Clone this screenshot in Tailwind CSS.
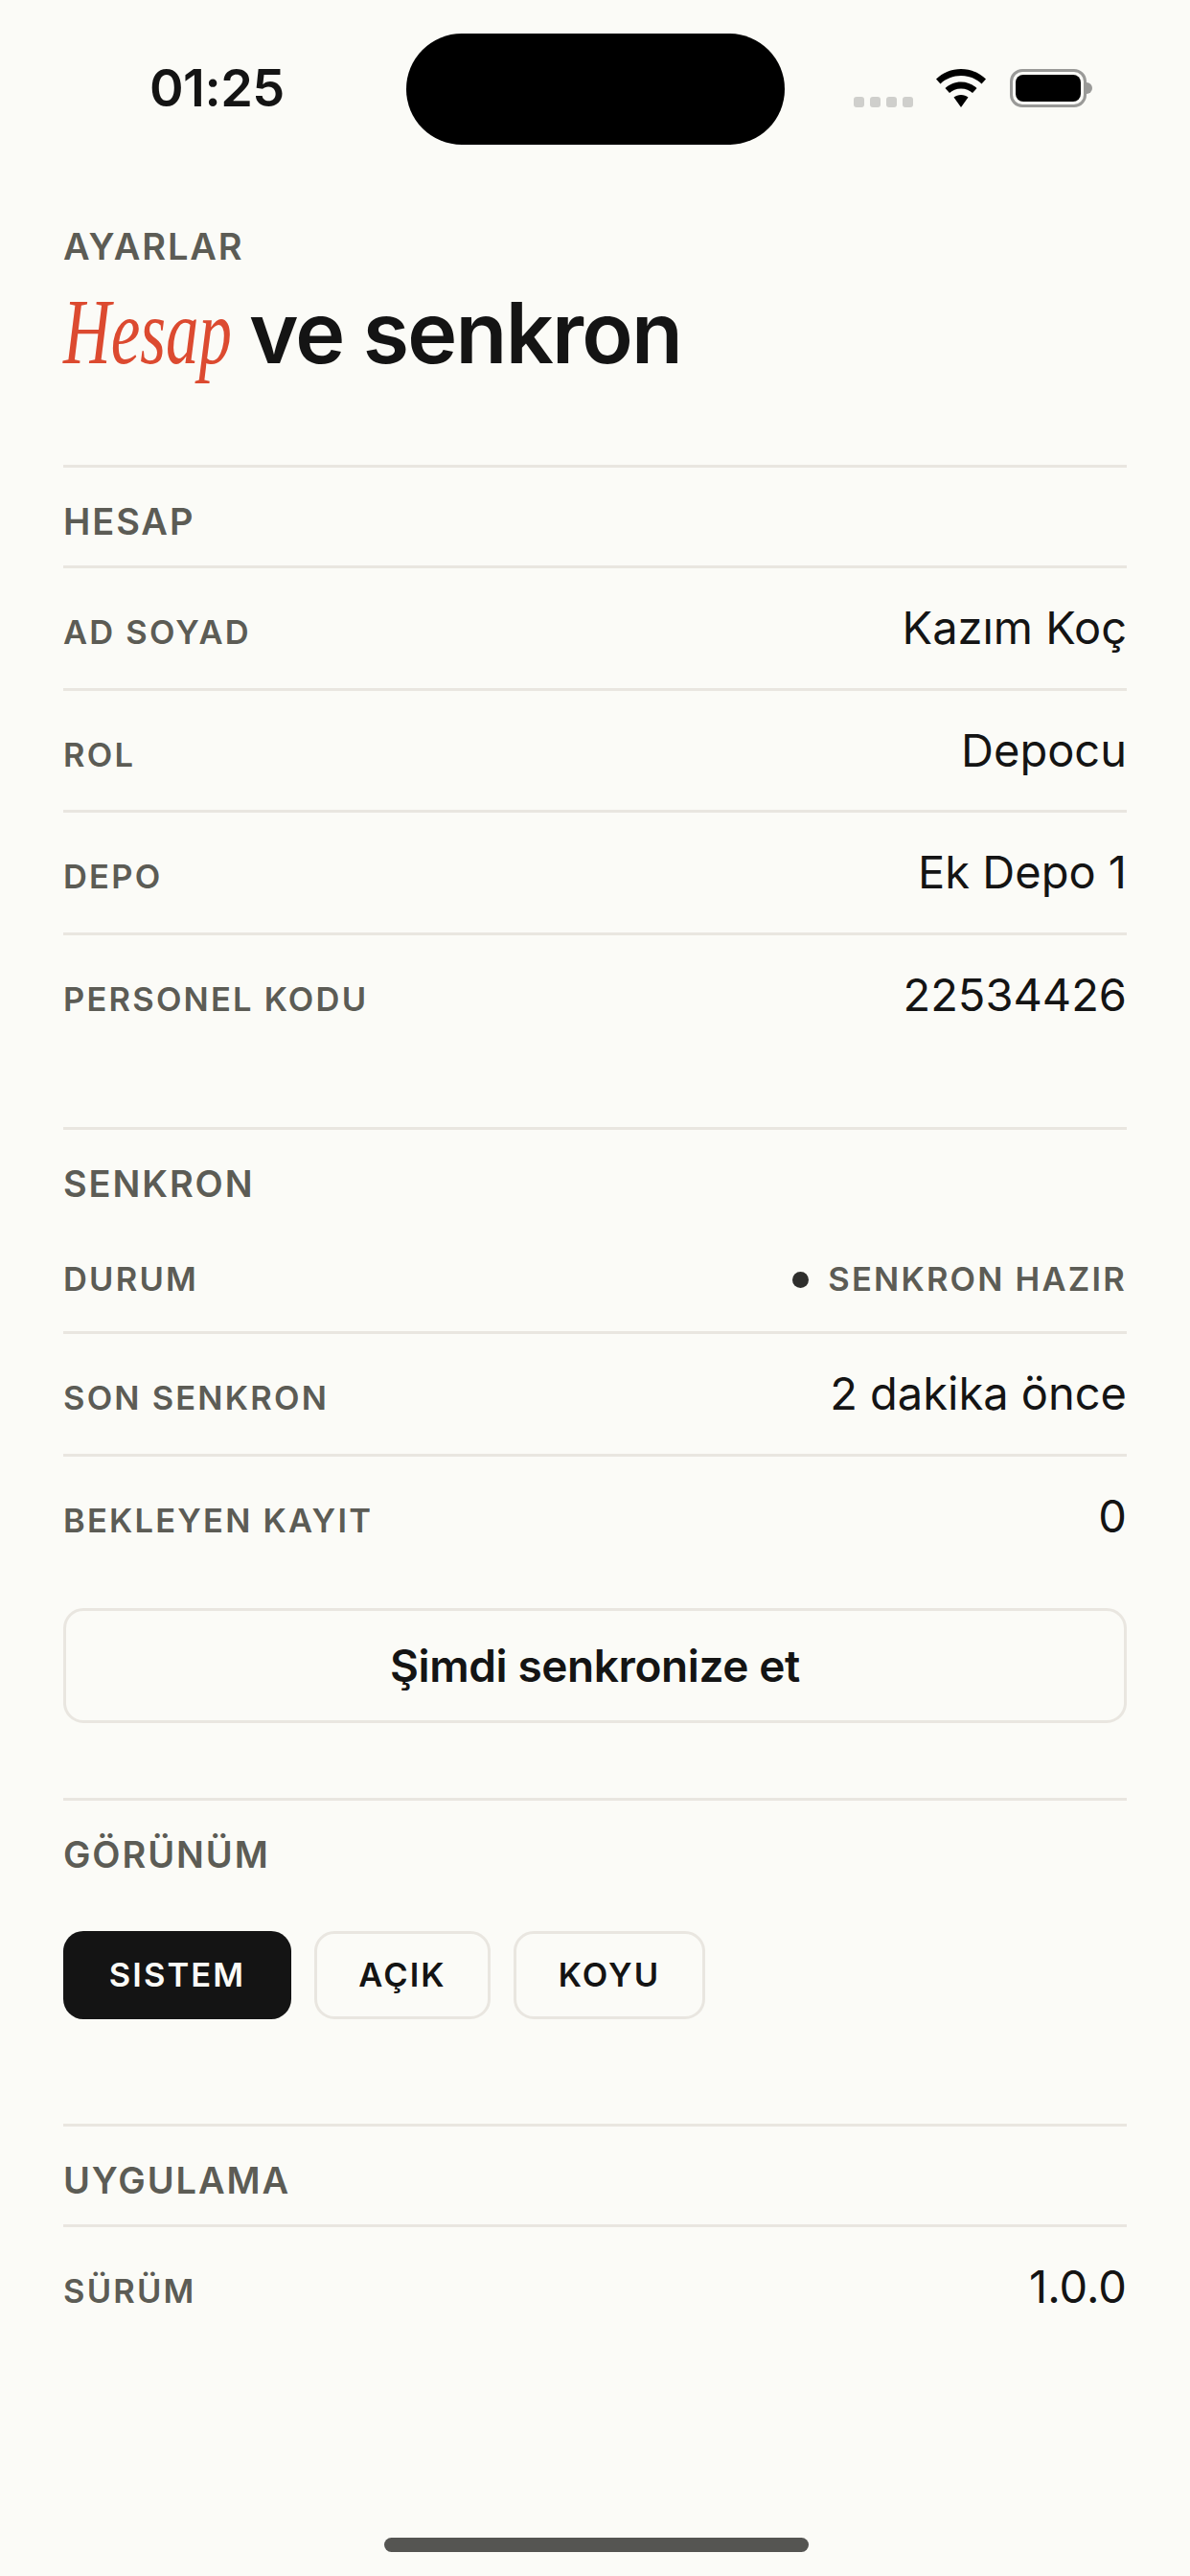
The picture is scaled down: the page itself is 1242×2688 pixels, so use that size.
<!doctype html>
<html lang="tr">
  <head>
    <meta charset="UTF-8" />
    <meta name="viewport" content="width=device-width, initial-scale=1.0" />
    <title>Ayarlar</title>
    <script src="https://cdn.jsdelivr.net/npm/@tailwindcss/browser@4"></script>
  </head>
  <body class="w-[1242px] h-[2688px] overflow-hidden bg-[#fbfbf7] font-['Inter',sans-serif] text-[#141414]">
    <!-- status bar -->
    <div class="flex items-start h-[235px] pt-[35px]">
      <div class="w-[268px] ml-[156px] mt-[30px] text-[54px] leading-[54px] font-semibold tracking-[-0.5px]">01:25</div>
      <div class="w-[395px] h-[116px] rounded-full bg-black"></div>
      <div class="flex gap-[6.5px] ml-[72px] mt-[66px]">
        <span class="w-[10.5px] h-[11px] rounded-[3px] bg-[#cfcfcc]"></span>
        <span class="w-[10.5px] h-[11px] rounded-[3px] bg-[#cfcfcc]"></span>
        <span class="w-[10.5px] h-[11px] rounded-[3px] bg-[#cfcfcc]"></span>
        <span class="w-[10.5px] h-[11px] rounded-[3px] bg-[#cfcfcc]"></span>
      </div>
      <svg class="ml-[24px] mt-[37px]" width="52" height="40" viewBox="0 0 52 40" fill="#000">
        <path d="M26 0C16 0 7 4 0 10.5L4.5 15.5C10 10 18 7 26 7C34 7 42 10 47.5 15.5L52 10.5C45 4 36 0 26 0Z" />
        <path d="M26 13.5C19.5 13.5 14 16 9.5 20L14 25C17 22.5 21 20.5 26 20.5C31 20.5 35 22.5 38 25L42.5 20C38 16 32.5 13.5 26 13.5Z" />
        <path d="M26 27C23 27 20.5 28 18.5 29.5L26 40L33.5 29.5C31.5 28 29 27 26 27Z" />
      </svg>
      <div class="ml-[25px] mt-[37px] flex items-center">
        <div class="w-[80px] h-[40px] rounded-[13px] border-[3px] border-[#9a9a98] p-[3px]">
          <div class="w-full h-full rounded-[8px] bg-black"></div>
        </div>
        <div class="w-[6px] h-[12px] rounded-r-full bg-[#9a9a98]"></div>
      </div>
    </div>

    <main class="px-[66px]">
      <div class="text-[38px] leading-[44px] font-semibold tracking-[1.9px] text-[#5c5c55]">AYARLAR</div>
      <h1 class="flex items-baseline mt-[17.5px] h-[188.5px] text-[88px] leading-[100px] font-semibold tracking-[-1.8px]">
        <span class="inline-block w-[194px] font-['Liberation_Serif',serif] italic font-normal text-[97px] tracking-normal text-[#dc4a30] origin-left scale-x-71">Hesap</span>
        <span>ve senkron</span>
      </h1>

      <!-- hesap -->
      <section class="border-t-[3px] border-[#e9e6e0] h-[691px]">
        <div class="h-[105px] pt-[33.5px] border-b-[3px] border-[#e9e6e0] text-[38px] leading-[44px] font-semibold tracking-[1.9px] text-[#5c5c55]">HESAP</div>
        <div class="flex items-baseline justify-between h-[127.5px] pt-[32px] border-b-[3px] border-[#e9e6e0]">
          <span class="text-[34.5px] font-semibold tracking-[2.2px] text-[#5c5c55]">AD SOYAD</span>
          <span class="text-[47px] leading-[60px]">Kazım Koç</span>
        </div>
        <div class="flex items-baseline justify-between h-[127.5px] pt-[32px] border-b-[3px] border-[#e9e6e0]">
          <span class="text-[34.5px] font-semibold tracking-[2.2px] text-[#5c5c55]">ROL</span>
          <span class="text-[47px] leading-[60px]">Depocu</span>
        </div>
        <div class="flex items-baseline justify-between h-[127.5px] pt-[32px] border-b-[3px] border-[#e9e6e0]">
          <span class="text-[34.5px] font-semibold tracking-[2.2px] text-[#5c5c55]">DEPO</span>
          <span class="text-[47px] leading-[60px]">Ek Depo 1</span>
        </div>
        <div class="flex items-baseline justify-between h-[127.5px] pt-[32px]">
          <span class="text-[34.5px] font-semibold tracking-[2.2px] text-[#5c5c55]">PERSONEL KODU</span>
          <span class="text-[47px] leading-[60px]">22534426</span>
        </div>
      </section>

      <!-- senkron -->
      <section class="border-t-[3px] border-[#e9e6e0] h-[700px]">
        <div class="h-[90px] pt-[33.5px] text-[38px] leading-[44px] font-semibold tracking-[1.9px] text-[#5c5c55]">SENKRON</div>
        <div class="flex items-baseline justify-between h-[123px] pt-[40px] border-b-[3px] border-[#e9e6e0]">
          <span class="text-[34.5px] font-semibold tracking-[2.2px] text-[#5c5c55]">DURUM</span>
          <span class="text-[34.5px] font-semibold tracking-[2.2px] text-[#5c5c55]"><i class="inline-block align-[3.5px] w-[17px] h-[17px] rounded-full bg-[#2e2e2c] mr-[20px]"></i>SENKRON HAZIR</span>
        </div>
        <div class="flex items-baseline justify-between h-[127.5px] pt-[32px] border-b-[3px] border-[#e9e6e0]">
          <span class="text-[34.5px] font-semibold tracking-[2.2px] text-[#5c5c55]">SON SENKRON</span>
          <span class="text-[47px] leading-[60px]">2 dakika önce</span>
        </div>
        <div class="flex items-baseline justify-between h-[127.5px] pt-[32px]">
          <span class="text-[34.5px] font-semibold tracking-[2.2px] text-[#5c5c55]">BEKLEYEN KAYIT</span>
          <span class="text-[47px] leading-[60px]">0</span>
        </div>
        <button class="block w-full h-[120px] mt-[31px] rounded-[21px] border-[3px] border-[#e9e6e0] text-[46px] font-semibold tracking-[-0.4px]">Şimdi senkronize et</button>
      </section>

      <!-- gorunum -->
      <section class="border-t-[3px] border-[#e9e6e0] h-[340px]">
        <div class="h-[135.5px] pt-[33.5px] text-[38px] leading-[44px] font-semibold tracking-[1.9px] text-[#5c5c55]">GÖRÜNÜM</div>
        <div class="flex gap-[24px]">
          <button class="w-[238px] h-[92px] rounded-[21px] bg-[#141414] text-[#fbfbf7] text-[34.5px] font-semibold tracking-[2.1px]">SISTEM</button>
          <button class="w-[184px] h-[92px] rounded-[21px] border-[3px] border-[#e9e6e0] text-[34.5px] font-semibold tracking-[2.1px]">AÇIK</button>
          <button class="w-[200px] h-[92px] rounded-[21px] border-[3px] border-[#e9e6e0] text-[34.5px] font-semibold tracking-[2.1px]">KOYU</button>
        </div>
      </section>

      <!-- uygulama -->
      <section class="border-t-[3px] border-[#e9e6e0]">
        <div class="h-[105px] pt-[33.5px] border-b-[3px] border-[#e9e6e0] text-[38px] leading-[44px] font-semibold tracking-[1.9px] text-[#5c5c55]">UYGULAMA</div>
        <div class="flex items-baseline justify-between h-[127.5px] pt-[32px]">
          <span class="text-[34.5px] font-semibold tracking-[2.2px] text-[#5c5c55]">SÜRÜM</span>
          <span class="text-[47px] leading-[60px]">1.0.0</span>
        </div>
      </section>
    </main>

    <div class="fixed left-[401px] top-[2648px] w-[443px] h-[15px] rounded-full bg-[#555552]"></div>
  </body>
</html>
